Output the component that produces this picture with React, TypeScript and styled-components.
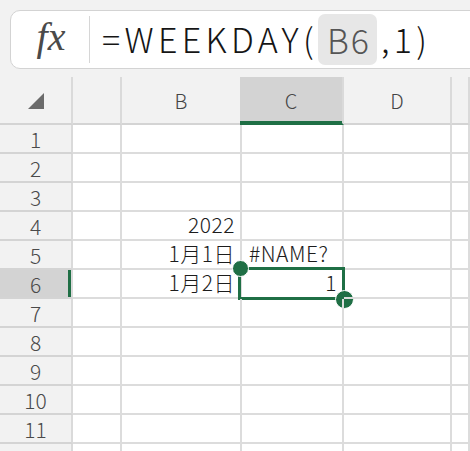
import styled, { createGlobalStyle } from 'styled-components';

const GREEN = '#1f6f45';
const FONT = `"Noto Sans CJK JP", "Noto Sans", sans-serif`;

const GlobalStyle = createGlobalStyle`
  html, body {
    margin: 0;
    padding: 0;
    background: #f2f2f2;
    overflow: hidden;
  }
  body {
    font-family: ${FONT};
  }
`;

const columns = ['', 'B', 'C', 'D', ''];
const selectedCol = 2;
const selectedRow = 6;

type Cell = { text: string; align: 'left' | 'right' };
const data: Record<number, Record<number, Cell>> = {
  4: { 1: { text: '2022', align: 'right' } },
  5: {
    1: { text: '1月1日', align: 'right' },
    2: { text: '#NAME?', align: 'left' },
  },
  6: {
    1: { text: '1月2日', align: 'right' },
    2: { text: '1', align: 'right' },
  },
};

const rows = Array.from({ length: 12 }, (_, i) => i + 1);

function App() {
  return (
    <Page>
      <GlobalStyle />
      <FormulaArea>
        <FormulaBox>
          <FxLabel>fx</FxLabel>
          <Divider />
          <FormulaText>
            =WEEKDAY(<RefChip>B6</RefChip>,1)
          </FormulaText>
        </FormulaBox>
      </FormulaArea>

      <Sheet>
        <CornerCell>
          <svg width="16" height="16" viewBox="0 0 16 16">
            <polygon points="16,0 16,16 0,16" fill="#6b6b6b" />
          </svg>
        </CornerCell>
        {columns.map((c, i) => (
          <ColHeader key={`col-${i}`} $selected={i === selectedCol}>
            {c}
          </ColHeader>
        ))}

        {rows.map(r => (
          <RowGroup key={`row-${r}`} r={r} />
        ))}
      </Sheet>
    </Page>
  );
}

function RowGroup({ r }: { r: number }) {
  const cells = data[r] || {};
  return (
    <>
      <RowHeader $selected={r === selectedRow}>{r}</RowHeader>
      {[0, 1, 2, 3, 4].map(c => {
        const cell = cells[c];
        const active = r === selectedRow && c === selectedCol;
        return (
          <GridCell key={`cell-${r}-${c}`} $align={cell?.align ?? 'left'}>
            {cell && <CellText>{cell.text}</CellText>}
            {active && (
              <>
                <SelectionFrame />
                <Handle $corner="start" />
                <Handle $corner="end" />
              </>
            )}
          </GridCell>
        );
      })}
    </>
  );
}

export default App;

const Page = styled.div`
  width: 470px;
  height: 451px;
  overflow: hidden;
  background: #f2f2f2;
`;

const FormulaArea = styled.div`
  padding: 10px 0 0 10px;
  height: 77px;
  box-sizing: border-box;
`;

const FormulaBox = styled.div`
  display: flex;
  align-items: center;
  height: 59px;
  box-sizing: border-box;
  margin-right: -30px;
  background: #ffffff;
  border: 1px solid #d3d3d3;
  border-radius: 10px;
`;

const FxLabel = styled.div`
  width: 78px;
  text-align: center;
  font-family: "Liberation Serif", "DejaVu Serif", serif;
  font-style: italic;
  font-size: 40px;
  color: #4a4a4a;
  margin-top: -6px;
  padding-left: 2px;
  box-sizing: border-box;
`;

const Divider = styled.div`
  width: 1px;
  height: 47px;
  background: #d6d6d6;
`;

const FormulaText = styled.div`
  display: flex;
  align-items: center;
  padding-left: 12px;
  margin-top: -3px;
  font-size: 34px;
  font-weight: 300;
  color: #151515;
  white-space: nowrap;
  letter-spacing: 4.3px;
`;

const RefChip = styled.span`
  display: inline-flex;
  align-items: center;
  height: 51px;
  padding: 0 6px 0 9px;
  margin: 3px 4px 0 0;
  background: #e7e7e7;
  border-radius: 7px;
  color: #555555;
  letter-spacing: 2px;
`;

const Sheet = styled.div`
  display: grid;
  grid-template-columns: 73px 49px 120px 102px 108px 1fr;
  grid-template-rows: 48px;
  grid-auto-rows: 29px;
  background: #ffffff;
`;

const HeaderBase = styled.div`
  display: flex;
  align-items: center;
  justify-content: center;
  box-sizing: border-box;
  background: #f2f2f2;
  border-right: 2px solid #dadada;
  border-bottom: 2px solid #d4d4d4;
  color: #444444;
  font-size: 20px;
  font-weight: 300;
`;

const CornerCell = styled(HeaderBase)`
  padding-top: 2px;
`;

const ColHeader = styled(HeaderBase)<{ $selected?: boolean }>`
  background: ${p => (p.$selected ? '#d3d3d3' : '#f2f2f2')};
  border-bottom-color: ${p => (p.$selected ? GREEN : '#d4d4d4')};
  box-shadow: ${p => (p.$selected ? `inset 0 -2px 0 ${GREEN}` : 'none')};
  ${p => p.$selected && 'margin-left: -2px;'}
`;

const RowHeader = styled(HeaderBase)<{ $selected?: boolean }>`
  font-size: 21px;
  color: #4a4a4a;
  background: ${p => (p.$selected ? '#d3d3d3' : '#f2f2f2')};
  box-shadow: ${p => (p.$selected ? `inset -3px 0 0 ${GREEN}` : 'none')};
  padding-top: 1px;
`;

const GridCell = styled.div<{ $align: 'left' | 'right' }>`
  position: relative;
  display: flex;
  align-items: center;
  justify-content: ${p => (p.$align === 'right' ? 'flex-end' : 'flex-start')};
  padding: 0 5px 0 7px;
  box-sizing: border-box;
  border-right: 2px solid #dcdcdc;
  border-bottom: 2px solid #dcdcdc;
  font-size: 21px;
  font-weight: 300;
  color: #1c1c1c;
  white-space: nowrap;
  letter-spacing: 0.5px;
`;

const CellText = styled.span`
  line-height: 1;
  margin-top: -3px;
`;

const SelectionFrame = styled.div`
  position: absolute;
  left: -4px;
  top: -3px;
  right: -3px;
  bottom: -3px;
  border: 3px solid ${GREEN};
  pointer-events: none;
`;

const Handle = styled.div<{ $corner: 'start' | 'end' }>`
  position: absolute;
  border-radius: 50%;
  background: ${GREEN};
  border: 1px solid #ffffff;
  box-sizing: border-box;
  ${p =>
    p.$corner === 'start'
      ? 'width: 17px; height: 17px; left: -10px; top: -10px;'
      : 'width: 19px; height: 19px; right: -12px; bottom: -12px;'}
`;
